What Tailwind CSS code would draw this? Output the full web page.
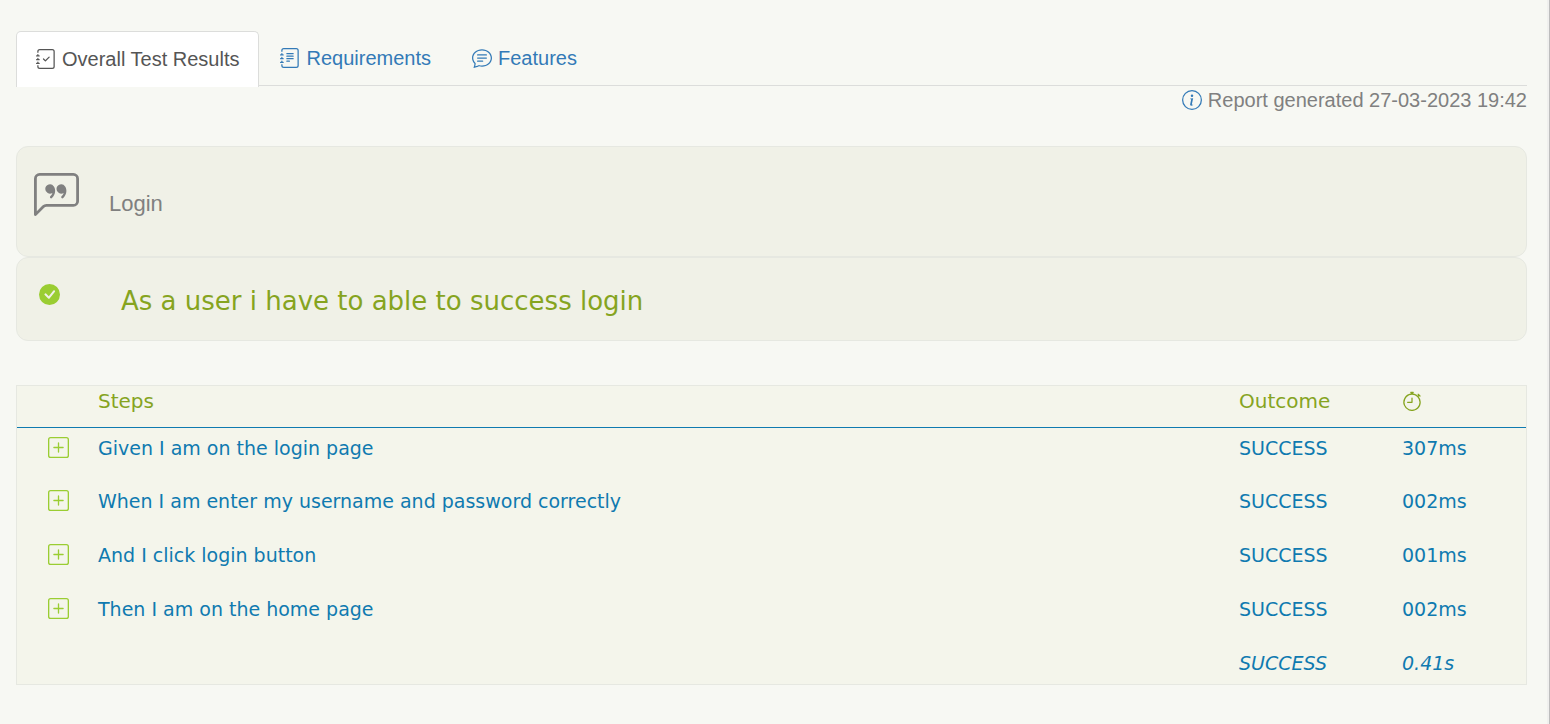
<!DOCTYPE html>
<html lang="en">
<head>
<meta charset="utf-8">
<meta name="viewport" content="width=device-width, initial-scale=1">
<title>Test Report</title>
<script src="https://cdn.jsdelivr.net/npm/@tailwindcss/browser@4"></script>
</head>
<body class="min-h-screen border-r border-[#bdbdbd] bg-[#f7f8f3] font-['Liberation_Sans',Arial,sans-serif] text-xl">
<svg class="hidden" aria-hidden="true">
  <symbol id="journal" viewBox="0 0 16 16">
    <path d="M3 0h10a2 2 0 0 1 2 2v12a2 2 0 0 1-2 2H3a2 2 0 0 1-2-2v-1h1v1a1 1 0 0 0 1 1h10a1 1 0 0 0 1-1V2a1 1 0 0 0-1-1H3a1 1 0 0 0-1 1v1H1V2a2 2 0 0 1 2-2z"/>
    <path d="M1 5v-.5a.5.5 0 0 1 1 0V5h.5a.5.5 0 0 1 0 1h-2a.5.5 0 0 1 0-1H1zm0 3v-.5a.5.5 0 0 1 1 0V8h.5a.5.5 0 0 1 0 1h-2a.5.5 0 0 1 0-1H1zm0 3v-.5a.5.5 0 0 1 1 0v.5h.5a.5.5 0 0 1 0 1h-2a.5.5 0 0 1 0-1H1z"/>
  </symbol>
  <symbol id="plus-square" viewBox="0 0 16 16">
    <path d="M14 1a1 1 0 0 1 1 1v12a1 1 0 0 1-1 1H2a1 1 0 0 1-1-1V2a1 1 0 0 1 1-1h12zM2 0a2 2 0 0 0-2 2v12a2 2 0 0 0 2 2h12a2 2 0 0 0 2-2V2a2 2 0 0 0-2-2H2z"/>
    <path d="M8 4a.5.5 0 0 1 .5.5v3h3a.5.5 0 0 1 0 1h-3v3a.5.5 0 0 1-1 0v-3h-3a.5.5 0 0 1 0-1h3v-3A.5.5 0 0 1 8 4z"/>
  </symbol>
</svg>
<div class="min-h-screen border-r-2 border-[#f0f0ee]">
<main class="pt-[31px] pr-5 pb-8 pl-4">
  <nav class="flex border-b border-[#dcdddb] text-[#337ab7]">
    <a href="#results" aria-current="page" class="-mb-0.5 flex items-center gap-1.5 rounded-t-[5px] border border-b-0 border-[#dcdddb] bg-white pr-[19px] pb-0.5 pl-[19px] text-[#555555]">
      <svg class="size-5" viewBox="0 0 16 16" fill="currentColor"><use href="#journal"/><path d="M10.854 6.146a.5.5 0 0 1 0 .708l-3 3a.5.5 0 0 1-.708 0l-1.5-1.5a.5.5 0 1 1 .708-.708L7.5 8.793l2.646-2.647a.5.5 0 0 1 .708 0z"/></svg>
      Overall Test Results
    </a>
    <a href="#requirements" class="flex h-[54px] items-center gap-1.5 px-[21px]">
      <svg class="size-5" viewBox="0 0 16 16" fill="currentColor"><use href="#journal"/><path d="M5 10.5a.5.5 0 0 1 .5-.5h2a.5.5 0 0 1 0 1h-2a.5.5 0 0 1-.5-.5zm0-2a.5.5 0 0 1 .5-.5h5a.5.5 0 0 1 0 1h-5a.5.5 0 0 1-.5-.5zm0-2a.5.5 0 0 1 .5-.5h5a.5.5 0 0 1 0 1h-5a.5.5 0 0 1-.5-.5zm0-2a.5.5 0 0 1 .5-.5h5a.5.5 0 0 1 0 1h-5a.5.5 0 0 1-.5-.5z"/></svg>
      Requirements
    </a>
    <a href="#features" class="flex h-[54px] items-center gap-1.5 px-5">
      <svg class="size-5" viewBox="0 0 16 16" fill="currentColor"><path d="M2.678 11.894a1 1 0 0 1 .287.801 10.97 10.97 0 0 1-.398 2c1.395-.323 2.247-.697 2.634-.893a1 1 0 0 1 .71-.074A8.06 8.06 0 0 0 8 14c3.996 0 7-2.807 7-6 0-3.192-3.004-6-7-6S1 4.808 1 8c0 1.468.617 2.83 1.678 3.894zm-.493 3.905a21.682 21.682 0 0 1-.713.129c-.2.032-.352-.176-.273-.362a9.68 9.68 0 0 0 .244-.637l.003-.01c.248-.72.45-1.548.524-2.319C.743 11.37 0 9.76 0 8c0-3.866 3.582-7 8-7s8 3.134 8 7-3.582 7-8 7a9.06 9.06 0 0 1-2.347-.306c-.52.263-1.639.742-3.468 1.105z"/><path d="M4 5.5a.5.5 0 0 1 .5-.5h7a.5.5 0 0 1 0 1h-7a.5.5 0 0 1-.5-.5zM4 8a.5.5 0 0 1 .5-.5h7a.5.5 0 0 1 0 1h-7A.5.5 0 0 1 4 8zm0 2.5a.5.5 0 0 1 .5-.5h4a.5.5 0 0 1 0 1h-4a.5.5 0 0 1-.5-.5z"/></svg>
      Features
    </a>
  </nav>

  <p class="flex items-center justify-end gap-1.5 text-[#808080]">
    <svg class="size-5 text-[#337ab7]" viewBox="0 0 16 16" fill="currentColor"><path d="M8 15A7 7 0 1 1 8 1a7 7 0 0 1 0 14zm0 1A8 8 0 1 0 8 0a8 8 0 0 0 0 16z"/><path d="m8.93 6.588-2.29.287-.082.38.45.083c.294.07.352.176.288.469l-.738 3.468c-.194.897.105 1.319.808 1.319.545 0 1.178-.252 1.465-.598l.088-.416c-.2.176-.492.246-.686.246-.275 0-.375-.193-.304-.533L8.93 6.588zM9 4.5a1 1 0 1 1-2 0 1 1 0 0 1 2 0z"/></svg>
    Report generated 27-03-2023 19:42
  </p>

  <section class="mt-8 flex h-[111px] items-start gap-[30px] rounded-xl border border-[#e6e8e1] bg-[#f0f1e7] px-[17px] pt-[26px] text-[#808080]">
    <svg class="size-[45px]" viewBox="0 0 16 16" fill="currentColor"><path d="M14 1a1 1 0 0 1 1 1v8a1 1 0 0 1-1 1H4.414A2 2 0 0 0 3 11.586l-2 2V2a1 1 0 0 1 1-1h12zM2 0a2 2 0 0 0-2 2v12.793a.5.5 0 0 0 .854.353l2.853-2.853A1 1 0 0 1 4.414 12H14a2 2 0 0 0 2-2V2a2 2 0 0 0-2-2H2z"/><path d="M7.066 4.76A1.665 1.665 0 0 0 4 5.668a1.667 1.667 0 0 0 2.561 1.406c-.131.389-.375.804-.777 1.22a.417.417 0 1 0 .6.58c1.486-1.54 1.293-3.214.682-4.112zm4 0A1.665 1.665 0 0 0 8 5.668a1.667 1.667 0 0 0 2.561 1.406c-.131.389-.375.804-.777 1.22a.417.417 0 1 0 .6.58c1.486-1.54 1.293-3.214.682-4.112z"/></svg>
    <h1 class="pt-4 text-[22px] leading-[30px]">Login</h1>
  </section>

  <section class="flex h-[84px] items-start gap-[61px] rounded-xl border border-[#e6e8e1] bg-[#f0f1e7] px-[22px] pt-[26px] font-['DejaVu_Sans',Verdana,sans-serif] text-[#86a41f]">
    <svg class="size-[21px] text-[#9acd32]" viewBox="0 0 16 16" fill="currentColor"><path d="M16 8A8 8 0 1 1 0 8a8 8 0 0 1 16 0zm-3.97-3.03a.75.75 0 0 0-1.08.022L7.477 9.417 5.384 7.323a.75.75 0 0 0-1.06 1.06L6.97 11.03a.75.75 0 0 0 1.079-.02l3.992-4.99a.75.75 0 0 0-.01-1.05z"/></svg>
    <h2 class="text-[26px] leading-[34px]">As a user i have to able to success login</h2>
  </section>

  <div class="mt-11 border border-[#e6e8e1] bg-[#f4f5eb] font-['DejaVu_Sans',Verdana,sans-serif] text-[19px] leading-6 text-[#0f7ab0]">
    <table class="w-full table-fixed border-collapse text-left [&_td]:pt-2 [&_td]:align-top">
      <colgroup><col class="w-[81px]"><col><col class="w-[163px]"><col class="w-[124px]"></colgroup>
      <thead>
        <tr class="h-[41px] border-b border-[#0f7ab0] align-top text-xl leading-6 text-[#86a41f] [&_th]:pt-[3px] [&_th]:font-normal">
          <td></td>
          <th scope="col">Steps</th>
          <th scope="col">Outcome</th>
          <th scope="col"><svg class="mt-0.5 size-5" role="img" aria-label="Duration" viewBox="0 0 16 16" fill="currentColor"><path d="M8.5 5.6a.5.5 0 1 0-1 0v2.9h-3a.5.5 0 0 0 0 1H8a.5.5 0 0 0 .5-.5V5.6z"/><path d="M6.5 1A.5.5 0 0 1 7 .5h2a.5.5 0 0 1 0 1v.57c1.36.196 2.594.78 3.584 1.64a.715.715 0 0 1 .012-.013l.354-.354-.354-.353a.5.5 0 0 1 .707-.708l1.414 1.415a.5.5 0 1 1-.707.707l-.353-.354-.354.354a.512.512 0 0 1-.013.012A7 7 0 1 1 7 2.071V1.5a.5.5 0 0 1-.5-.5zM8 3a6 6 0 1 0 .001 12A6 6 0 0 0 8 3z"/></svg></th>
        </tr>
      </thead>
      <tbody>
        <tr class="h-[54px]">
          <td class="pl-[31px]"><button type="button" aria-label="Expand step 1" class="block pt-px text-[#9acd32]"><svg class="size-[21px]" fill="currentColor"><use href="#plus-square"/></svg></button></td>
          <td>Given I am on the login page</td><td>SUCCESS</td><td>307ms</td>
        </tr>
        <tr class="h-[54px]">
          <td class="pl-[31px]"><button type="button" aria-label="Expand step 2" class="block pt-px text-[#9acd32]"><svg class="size-[21px]" fill="currentColor"><use href="#plus-square"/></svg></button></td>
          <td>When I am enter my username and password correctly</td><td>SUCCESS</td><td>002ms</td>
        </tr>
        <tr class="h-[54px]">
          <td class="pl-[31px]"><button type="button" aria-label="Expand step 3" class="block pt-px text-[#9acd32]"><svg class="size-[21px]" fill="currentColor"><use href="#plus-square"/></svg></button></td>
          <td>And I click login button</td><td>SUCCESS</td><td>001ms</td>
        </tr>
        <tr class="h-[54px]">
          <td class="pl-[31px]"><button type="button" aria-label="Expand step 4" class="block pt-px text-[#9acd32]"><svg class="size-[21px]" fill="currentColor"><use href="#plus-square"/></svg></button></td>
          <td>Then I am on the home page</td><td>SUCCESS</td><td>002ms</td>
        </tr>
      </tbody>
      <tfoot>
        <tr class="h-[41px] italic"><td></td><td></td><td>SUCCESS</td><td>0.41s</td></tr>
      </tfoot>
    </table>
  </div>
</main>
</div>
</body>
</html>
